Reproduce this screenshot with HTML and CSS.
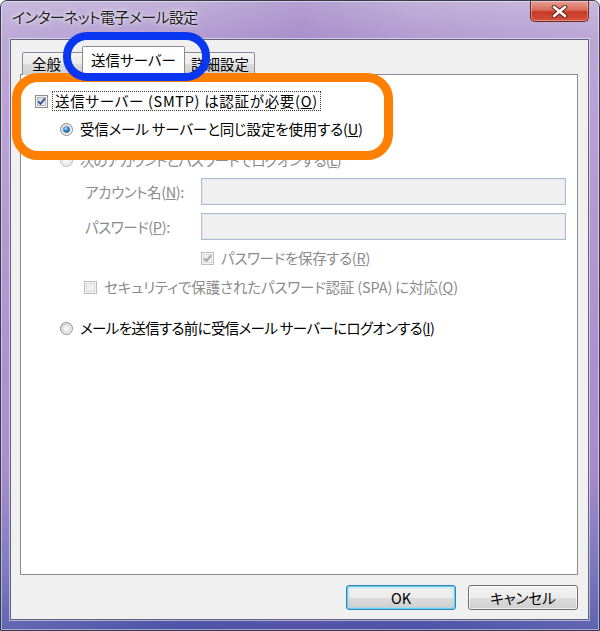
FILE: index.html
```html
<!DOCTYPE html>
<html lang="ja">
<head>
<meta charset="utf-8">
<title>インターネット電子メール設定</title>
<link rel="stylesheet" href="styles.css">
</head>
<body>
<div class="window">
  <div class="titlebar">
    <span class="title">インターネット電子メール設定</span>
    <div class="close">
      <svg width="17" height="13" viewBox="0 0 17 13">
        <path d="M3 2 L14 11 M14 2 L3 11" stroke="#6a2418" stroke-width="4.6" stroke-linecap="round"/>
        <path d="M3 2 L14 11 M14 2 L3 11" stroke="#ffffff" stroke-width="2.6" stroke-linecap="round"/>
      </svg>
    </div>
  </div>
  <div class="dialog">
    <div class="tabs">
      <div class="tab first">全般</div>
      <div class="tab active">送信サーバー</div>
      <div class="tab last">詳細設定</div>
    </div>
    <div class="panel">
      <div class="row r1">
        <svg class="ctl" width="13" height="13" viewBox="0 0 13 13">
          <defs><linearGradient id="cb1" x1="0" y1="0" x2="1" y2="1"><stop offset="0" stop-color="#cfd3d8"/><stop offset="1" stop-color="#f7f7f8"/></linearGradient></defs>
          <rect x=".5" y=".5" width="12" height="12" fill="#f4f4f4" stroke="#8e8f8f"/>
          <rect x="2.5" y="2.5" width="8" height="8" fill="url(#cb1)" stroke="#b3b8c0"/>
          <path d="M3.2 6.3 L5.6 8.9 L10 3.4" stroke="#3b5595" stroke-width="1.9" fill="none"/>
        </svg>
        <span class="label focus">送信サーバー (SMTP) は認証が必要(<u>O</u>)</span>
      </div>
      <div class="row r2">
        <svg class="ctl" width="13" height="13" viewBox="0 0 13 13">
          <defs>
            <linearGradient id="rb1" x1="0" y1="0" x2="1" y2="1"><stop offset="0" stop-color="#cfd2d6"/><stop offset="1" stop-color="#f9f9f9"/></linearGradient>
            <radialGradient id="rd1" cx=".4" cy=".35" r=".7"><stop offset="0" stop-color="#bfe6fb"/><stop offset=".45" stop-color="#3b8fd1"/><stop offset="1" stop-color="#0f3f86"/></radialGradient>
          </defs>
          <circle cx="6.5" cy="6.5" r="6" fill="url(#rb1)" stroke="#8e8f8f"/>
          <circle cx="6.5" cy="6.5" r="3.3" fill="url(#rd1)"/>
        </svg>
        <span class="label">受信メール サーバーと同じ設定を使用する(<u>U</u>)</span>
      </div>
      <div class="row r3 disabled">
        <svg class="ctl" width="13" height="13" viewBox="0 0 13 13">
          <circle cx="6.5" cy="6.5" r="6" fill="#f4f4f4" stroke="#b9b9b9"/>
          <circle cx="6.5" cy="6.5" r="4" fill="none" stroke="#e2e2e2"/>
        </svg>
        <span class="label">次のアカウントとパスワードでログオンする(<u>L</u>)</span>
      </div>
      <div class="field r4 disabled">
        <span class="flabel">アカウント名(<u>N</u>):</span>
        <div class="input"></div>
      </div>
      <div class="field r5 disabled">
        <span class="flabel">パスワード(<u>P</u>):</span>
        <div class="input"></div>
      </div>
      <div class="row r6 disabled">
        <svg class="ctl" width="13" height="13" viewBox="0 0 13 13">
          <rect x=".5" y=".5" width="12" height="12" fill="#f4f4f4" stroke="#bcbcbc"/>
          <rect x="2.5" y="2.5" width="8" height="8" fill="#f0f0f0" stroke="#dcdcdc"/>
          <path d="M3.2 6.3 L5.6 8.9 L10 3.4" stroke="#a3a3a3" stroke-width="1.9" fill="none"/>
        </svg>
        <span class="label">パスワードを保存する(<u>R</u>)</span>
      </div>
      <div class="row r7 disabled">
        <svg class="ctl" width="13" height="13" viewBox="0 0 13 13">
          <rect x=".5" y=".5" width="12" height="12" fill="#f4f4f4" stroke="#bcbcbc"/>
          <rect x="2.5" y="2.5" width="8" height="8" fill="#f0f0f0" stroke="#dcdcdc"/>
        </svg>
        <span class="label">セキュリティで保護されたパスワード認証 (SPA) に対応(<u>Q</u>)</span>
      </div>
      <div class="row r8">
        <svg class="ctl" width="13" height="13" viewBox="0 0 13 13">
          <defs><linearGradient id="rb2" x1="0" y1="0" x2="1" y2="1"><stop offset="0" stop-color="#cfd2d6"/><stop offset="1" stop-color="#f9f9f9"/></linearGradient></defs>
          <circle cx="6.5" cy="6.5" r="6" fill="url(#rb2)" stroke="#8e8f8f"/>
          <circle cx="6.5" cy="6.5" r="3.6" fill="#f2f2f2" stroke="#d4d6da" stroke-width=".8"/>
        </svg>
        <span class="label">メールを送信する前に受信メール サーバーにログオンする(<u>I</u>)</span>
      </div>
    </div>
    <div class="buttons">
      <button class="btn default">OK</button>
      <button class="btn">キャンセル</button>
    </div>
  </div>
  <div class="mark orange"></div>
  <div class="mark blue"></div>
</div>
</body>
</html>
```
FILE: styles.css
```css
html, body {
  margin: 0;
  padding: 0;
  background: #ffffff;
}

body {
  font-family: "Noto Sans CJK JP", "Noto Sans", sans-serif;
  font-feature-settings: "palt" 1;
}

.window {
  position: relative;
  box-sizing: border-box;
  width: 600px;
  height: 631px;
  display: flex;
  flex-direction: column;
  padding: 0 10px 10px 9px;
  border: 1px solid #3a3a4c;
  border-radius: 7px 7px 0 0;
  background:
    linear-gradient(to right, rgba(255, 255, 255, 0.12) 0, rgba(255, 255, 255, 0) 30%, rgba(120, 80, 170, 0.18) 50%, rgba(255, 255, 255, 0) 70%, rgba(255, 255, 255, 0.1) 100%),
    linear-gradient(to bottom, #c1b1d9 0, #b39cd1 38px, #a88acb 260px, #9e7ec7 470px, #6b68b6 570px, #4b52a6 631px);
  box-shadow: inset 0 0 0 1px rgba(255, 255, 255, 0.45);
}

.titlebar {
  height: 38px;
  flex: none;
  display: flex;
  align-items: flex-start;
  padding-left: 2px;
}

.title {
  margin-top: 6px;
  font-size: 15px;
  line-height: 20px;
  color: #1b1b1b;
  letter-spacing: -0.6px;
  text-shadow: 0 0 6px rgba(255, 255, 255, 0.9), 0 0 2px rgba(255, 255, 255, 0.8);
}

.close {
  margin-left: auto;
  width: 59px;
  height: 21px;
  box-sizing: border-box;
  border: 1px solid #6b2a22;
  border-top: none;
  border-radius: 0 0 5px 5px;
  background: linear-gradient(to bottom, #e6a193 0, #d86c5a 45%, #c63a24 55%, #d5503a 100%);
  box-shadow: inset 0 0 0 1px rgba(255, 255, 255, 0.35);
  display: flex;
  align-items: center;
  justify-content: center;
}

.dialog {
  flex: 1;
  display: flex;
  flex-direction: column;
  background: #f0f0f0;
  border: 1px solid #62627a;
  box-shadow: 0 0 0 1px rgba(255, 255, 255, 0.5);
  padding: 6px 10px 9px 9px;
  font-size: 14.5px;
  color: #000;
}

.tabs {
  display: flex;
  align-items: flex-end;
  margin-bottom: -1px;
  padding-left: 2px;
  position: relative;
  z-index: 1;
}

.tab {
  box-sizing: border-box;
  height: 23px;
  line-height: 21px;
  border: 1px solid #898c95;
  border-bottom: none;
  border-radius: 2px 2px 0 0;
  background: linear-gradient(to bottom, #f3f3f3 0, #ebebeb 50%, #dddddd 50%, #cfcfcf 100%);
  white-space: nowrap;
}

.tab.first {
  width: 62px;
  padding-left: 9px;
}

.tab.active {
  width: 103px;
  height: 29px;
  line-height: 26px;
  margin-left: -2px;
  margin-right: -2px;
  text-align: center;
  background: #ffffff;
  position: relative;
  z-index: 2;
}

.tab.last {
  width: 72px;
  text-align: center;
  padding-left: 2px;
}

.panel {
  flex: 1;
  background: #ffffff;
  border: 1px solid #898c95;
  padding: 16px 10px 0 14px;
  display: flex;
  flex-direction: column;
}

.row {
  display: flex;
  align-items: center;
  height: 20px;
  white-space: nowrap;
}

.ctl {
  flex: none;
  margin-right: 4px;
}

.label {
  padding: 0 2px;
  border: 1px solid transparent;
  line-height: 18px;
}

.label.focus {
  border: 1px dotted #3a3a3a;
}

.disabled {
  color: #8b8b8b;
}

.r1 .label { letter-spacing: 0.7px; }
.r2 { margin-top: 8px; margin-left: 25px; }
.r2 .label { letter-spacing: -0.15px; }
.r3 { margin-top: 11px; margin-left: 25px; }
.r3 .label { letter-spacing: -0.9px; }

.field {
  display: flex;
  align-items: center;
  margin-left: 50px;
  height: 27px;
}

.r4 { margin-top: 8px; }
.r5 { margin-top: 8px; }

.flabel {
  width: 116px;
  flex: none;
  letter-spacing: -0.4px;
}

.input {
  box-sizing: border-box;
  width: 365px;
  height: 27px;
  background: #f0f0f0;
  border: 1px solid #aebbd0;
  box-shadow: inset 0 0 0 1px #e4e9f0;
}

.r6 { margin-top: 8px; margin-left: 166px; }
.r6 .label { letter-spacing: -0.3px; }
.r7 { margin-top: 9px; margin-left: 49px; }
.r7 .label { letter-spacing: -0.15px; }
.r8 { margin-top: 21px; margin-left: 25px; }
.r8 .label { letter-spacing: -0.65px; }

.buttons {
  display: flex;
  justify-content: flex-end;
  gap: 12px;
  margin-top: 10px;
}

.btn {
  box-sizing: border-box;
  width: 110px;
  height: 25px;
  padding: 0;
  border: 1px solid #707070;
  border-radius: 3px;
  background: linear-gradient(to bottom, #f2f2f2 0, #ebebeb 50%, #dddddd 50%, #cfcfcf 100%);
  box-shadow: inset 0 0 0 1px rgba(255, 255, 255, 0.7);
  font-family: "Noto Sans CJK JP", "Noto Sans", sans-serif;
  font-feature-settings: "palt" 1;
  font-size: 14.5px;
  color: #000;
  line-height: 21px;
}

.btn.default {
  border-color: #3c7fb1;
  box-shadow: inset 0 0 0 1px #5fd0f8, inset 0 0 2px 2px rgba(140, 220, 250, 0.5);
}

.mark {
  position: absolute;
  box-sizing: border-box;
  pointer-events: none;
  z-index: 5;
}

.blue {
  left: 62px;
  top: 31px;
  width: 147px;
  height: 49px;
  border: 8px solid #0a36f2;
  border-radius: 24px;
  z-index: 6;
}

.orange {
  left: 11px;
  top: 72px;
  width: 381px;
  height: 87px;
  border: 9px solid #ff7f00;
  border-radius: 26px;
}
```
